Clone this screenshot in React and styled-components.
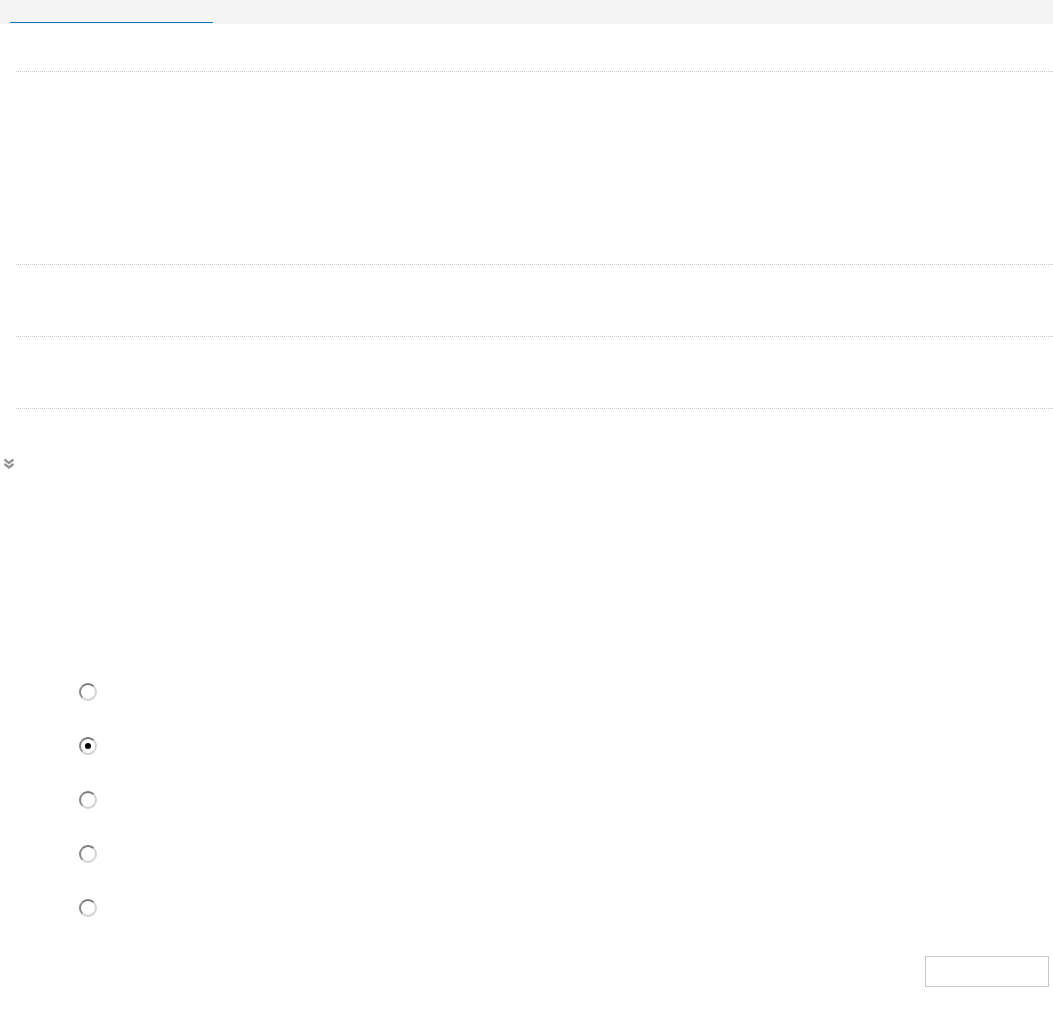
import React from "react";
import styled, { createGlobalStyle } from "styled-components";

const GlobalStyle = createGlobalStyle`
  html, body {
    margin: 0;
    padding: 0;
    background: #fff;
    font-family: "Liberation Sans", Arial, sans-serif;
    font-size: 13px;
    color: #fff;
  }
`;

const options = ["a", "b", "c", "d", "e"];

const App = () => {
  return (
    <>
      <GlobalStyle />
      <TopBar>
        <TopLink href="#" />
      </TopBar>
      <Sections>
        <Section $height={192} />
        <Section $height={71} />
        <Section $height={71} />
      </Sections>
      <Toggle>
        <svg width="12" height="12" viewBox="0 0 12 12">
          <path d="M1.5 1.5 L6 5 L10.5 1.5" fill="none" stroke="#959595" strokeWidth="2.4" strokeLinejoin="miter" />
          <path d="M1.5 6 L6 9.5 L10.5 6" fill="none" stroke="#959595" strokeWidth="2.4" strokeLinejoin="miter" />
        </svg>
      </Toggle>
      <Choices>
        {options.map((o, i) => (
          <ChoiceRow key={o}>
            <Radio $checked={i === 1} />
          </ChoiceRow>
        ))}
      </Choices>
      <Footer>
        <SubmitButton type="button" />
      </Footer>
    </>
  );
};

const TopBar = styled.div`
  height: 24px;
  background: #f4f4f4;
  padding-left: 10px;
  box-sizing: border-box;
`;

const TopLink = styled.a`
  display: block;
  width: 203px;
  height: 22px;
  border-bottom: 1px solid #0a78c0;
`;

const Sections = styled.div`
  margin-top: 47px;
  padding-left: 16px;
`;

const Section = styled.div`
  height: ${(p) => p.$height}px;
  border-top: 1px dotted #c8c8c8;
  &:last-child {
    border-bottom: 1px dotted #c8c8c8;
  }
`;

const Toggle = styled.div`
  margin-top: 49px;
  padding-left: 3px;
  height: 12px;
  line-height: 0;
`;

const Choices = styled.div`
  margin-top: 213px;
  padding-left: 79px;
  display: flex;
  flex-direction: column;
  gap: 37px;
`;

const ChoiceRow = styled.div`
  display: flex;
  align-items: center;
  height: 17px;
`;

const Radio = styled.span`
  position: relative;
  display: block;
  width: 14px;
  height: 14px;
  border-radius: 50%;
  border: 2px solid #d4d4d4;
  border-top-color: #7a7a7a;
  border-left-color: #8a8a8a;
  background: radial-gradient(circle at 50% 40%, #ffffff 50%, #eeeeee 100%);
  &::after {
    content: "";
    display: ${(p) => (p.$checked ? "block" : "none")};
    position: absolute;
    left: 4px;
    top: 4px;
    width: 6px;
    height: 6px;
    border-radius: 50%;
    background: #000;
  }
`;

const Footer = styled.div`
  margin-top: 40px;
  display: flex;
  justify-content: flex-end;
  padding-right: 4px;
`;

const SubmitButton = styled.button`
  width: 124px;
  height: 31px;
  background: #fff;
  border: 1px solid #c8c8c8;
  padding: 0;
`;

export default App;
